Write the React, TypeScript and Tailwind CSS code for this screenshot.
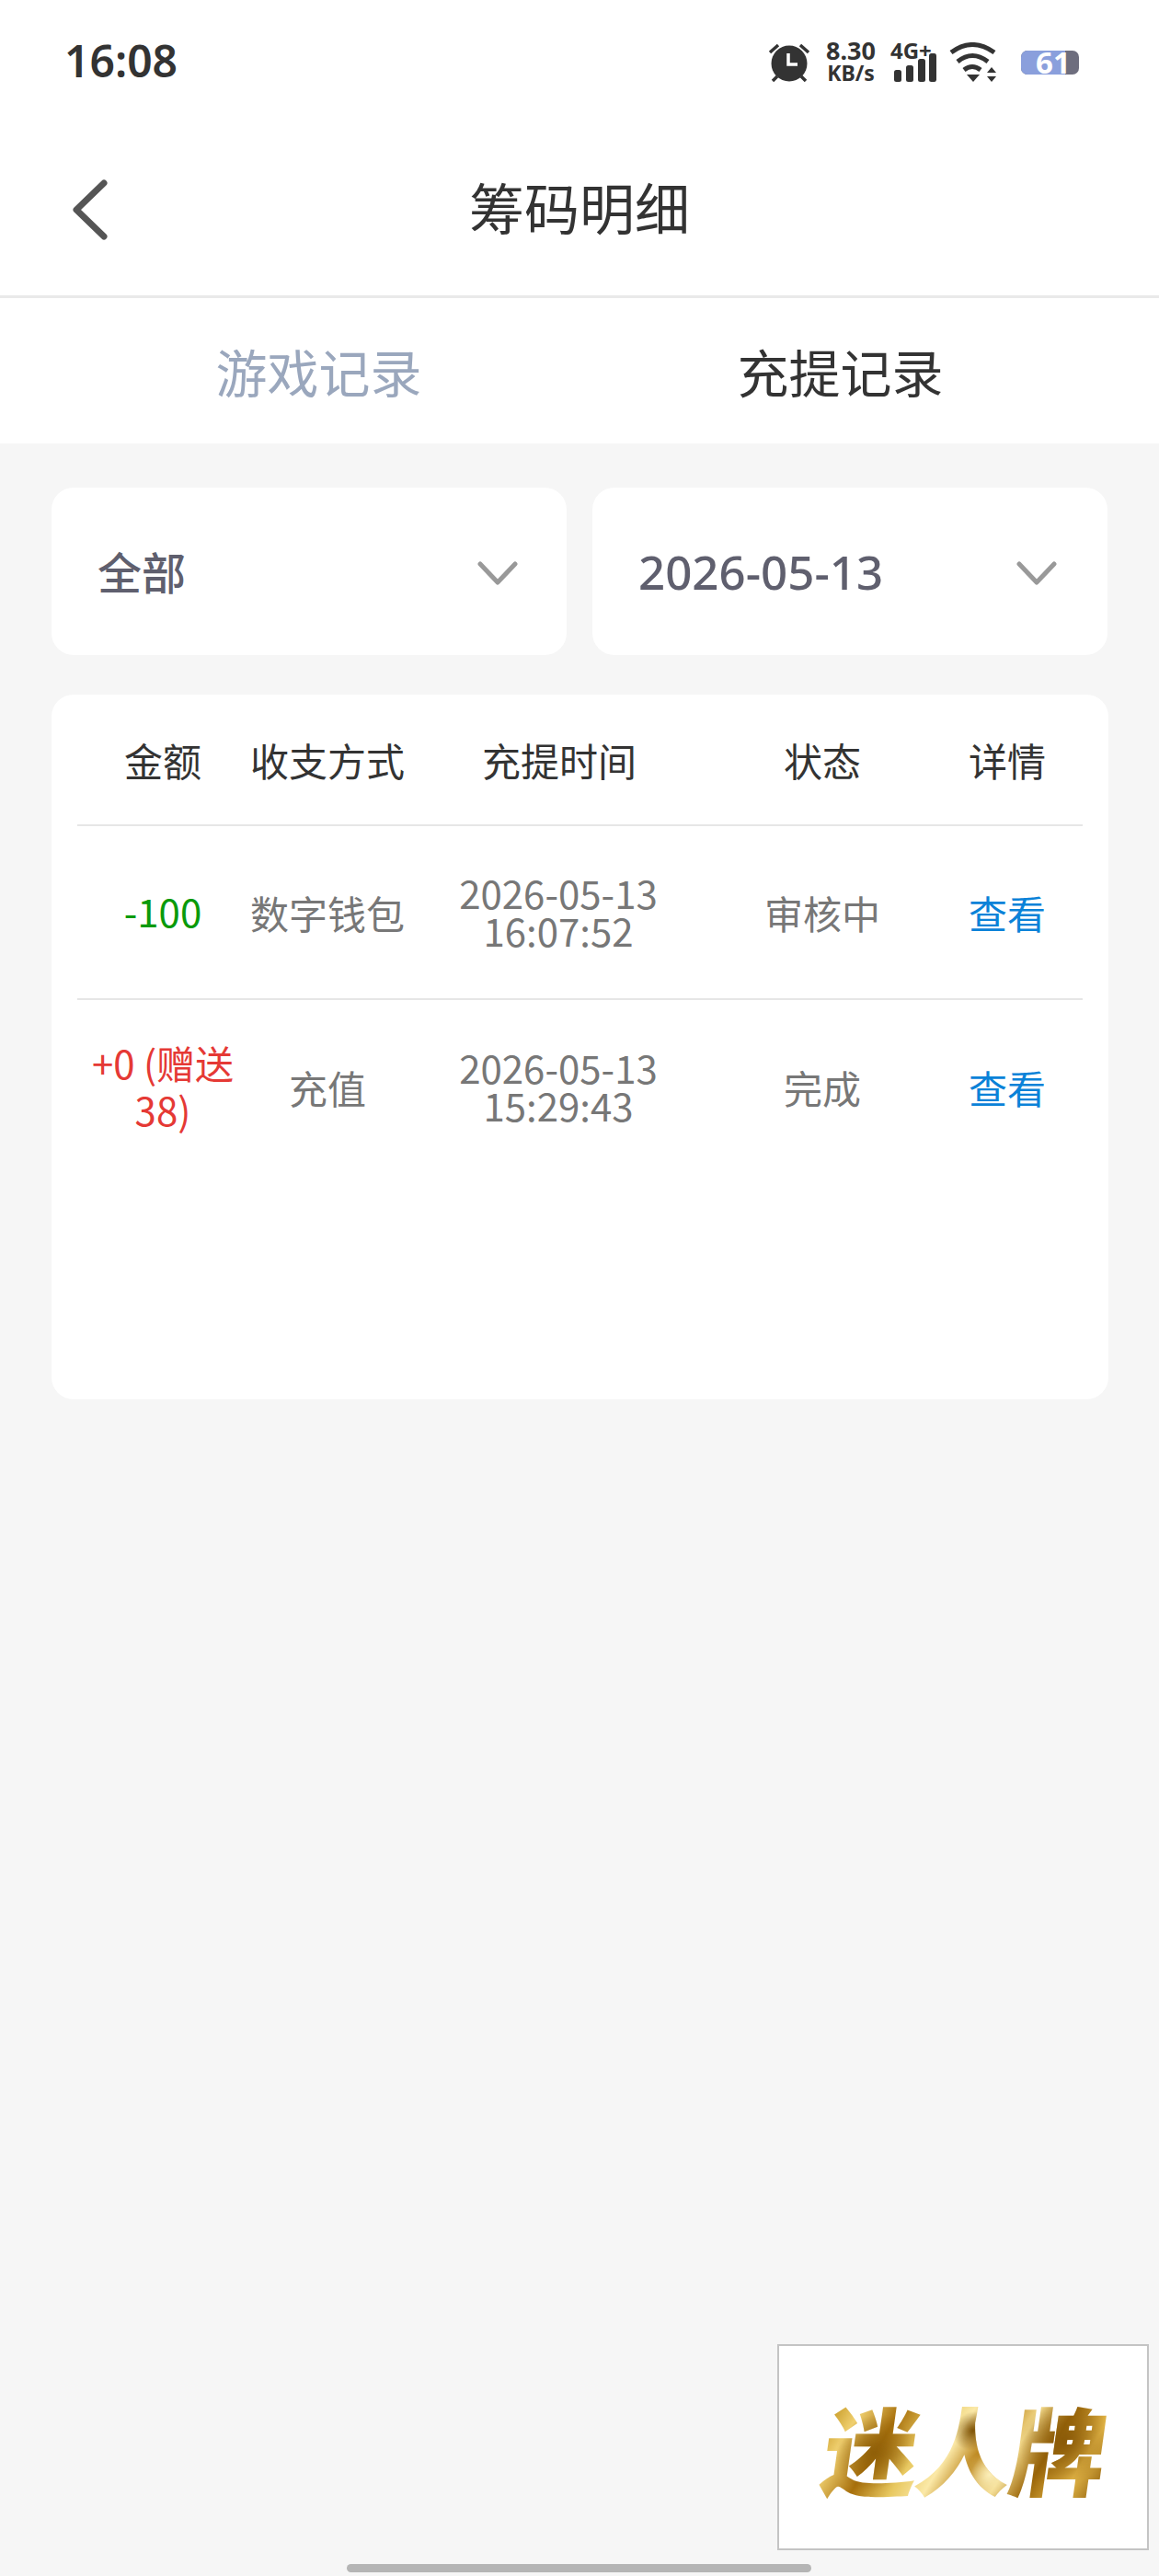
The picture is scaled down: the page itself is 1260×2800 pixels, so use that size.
const FONT = "font-['Noto_Sans_CJK_SC','Noto_Sans',sans-serif]"

const rows = [
  { amount: '-100', color: 'text-[#0a9a0a]', way: '数字钱包', date: '2026-05-13', time: '16:07:52', status: '审核中' },
  { amount: '+0 (赠送 38)', color: 'text-[#e53935]', way: '充值', date: '2026-05-13', time: '15:29:43', status: '完成' },
]

function Chevron() {
  return (
    <svg width="44" height="26" viewBox="0 0 44 26" fill="none" stroke="#999999" strokeWidth="5" strokeLinecap="round" strokeLinejoin="round" className="mt-[3px]">
      <path d="M3 3 L22 23 L41 3" />
    </svg>
  )
}

function StatusIcons() {
  return (
    <div className="flex items-center text-[#333333]">
      <svg width="46" height="44" viewBox="0 0 46 44" className="ml-[835px] shrink-0">
        <circle cx="23" cy="23" r="19.5" fill="#333333" />
        <path d="M22 12 V24 H32" fill="none" stroke="#ffffff" strokeWidth="3.5" />
        <path d="M2 11 L11 3 M44 11 L35 3 M5 42 L10 37 M41 42 L36 37" stroke="#333333" strokeWidth="3.5" />
      </svg>
      <div className="ml-[14px] flex w-[60px] shrink-0 flex-col items-center font-['Noto_Sans',sans-serif] font-bold">
        <span className="mt-[-3px] text-[27px] leading-[26px]">8.30</span>
        <span className="text-[23px] leading-[22px]">KB/s</span>
      </div>
      <div className="relative ml-[13px] h-[44px] w-[50px] shrink-0">
        <span className="absolute left-0 top-[-3px] font-['Noto_Sans',sans-serif] text-[24px] font-bold leading-[24px]">4G+</span>
        <svg width="50" height="44" viewBox="0 0 50 44" className="absolute left-0 top-0">
          <rect x="4" y="30" width="8" height="13" rx="2.5" fill="#333333" />
          <rect x="17" y="25" width="8" height="18" rx="2.5" fill="#333333" />
          <rect x="30" y="18" width="8" height="25" rx="2.5" fill="#333333" />
          <rect x="42" y="12" width="8" height="31" rx="2.5" fill="#333333" />
        </svg>
      </div>
      <svg width="52" height="44" viewBox="0 0 52 44" className="ml-[14px] shrink-0" fill="none" stroke="#333333" strokeWidth="5">
        <path d="M2 11 Q25 -6 49 11" />
        <path d="M9 21 Q25 8 42 21" />
        <path d="M16 30 Q25 23 34 30" />
        <path d="M19 35 H33 L26 43 Z" fill="#333333" stroke="none" />
        <path d="M41 33 L46 27 L51 33 Z M41 37 H51 L46 43 Z" fill="#333333" stroke="none" />
      </svg>
      <div className="relative ml-[26px] flex h-[26px] w-[63px] shrink-0 rounded-[7px] bg-[#6e6e7e]">
        <div className="h-full w-[48px] rounded-l-[7px] bg-[#8a9fdc]" />
        <span className="absolute left-[16px] top-0 font-['Noto_Sans',sans-serif] text-[33px] font-bold leading-[26px] text-white">61</span>
      </div>
    </div>
  )
}

export default function App() {
  return (
    <div className={`relative flex h-[2800px] w-[1260px] flex-col overflow-hidden bg-[#f6f6f6] ${FONT}`}>
      <div className="relative h-[132px] shrink-0 bg-white">
        <span className="absolute left-[70px] top-[33px] font-['Noto_Sans',sans-serif] text-[48px] font-semibold leading-[66px] text-[#333333]">16:08</span>
        <div className="absolute left-0 top-[45px]"><StatusIcons /></div>
      </div>

      <div className="relative flex h-[192px] shrink-0 items-start justify-center border-b-[3px] border-[#e9e9e9] bg-white">
        <svg width="40" height="66" viewBox="0 0 40 66" fill="none" stroke="#555555" strokeWidth="7" strokeLinecap="round" strokeLinejoin="round" className="absolute left-[78px] top-[63px]">
          <path d="M35 4 L5 33 L35 62" />
        </svg>
        <h1 className="mt-[52px] text-[60px] font-normal leading-[80px] text-[#333333]">筹码明细</h1>
      </div>

      <div className="grid h-[158px] shrink-0 grid-cols-2 items-center bg-white px-[63px] text-[56px] leading-[80px]">
        <span className="text-center text-[#9aa7bd]">游戏记录</span>
        <span className="text-center text-[#333333]">充提记录</span>
      </div>

      <div className="mt-[48px] grid grid-cols-2 gap-[28px] px-[56px]">
        <div className="flex h-[182px] items-center justify-between rounded-[24px] bg-white pl-[50px] pr-[53px] text-[48px] font-medium text-[#5f5f6e]">
          <span className="mt-[-3px]">全部</span>
          <Chevron />
        </div>
        <div className="flex h-[182px] items-center justify-between rounded-[24px] bg-white pl-[50px] pr-[55px] font-['Noto_Sans',sans-serif] text-[51px] font-medium text-[#5f5f6e]">
          <span>2026-05-13</span>
          <Chevron />
        </div>
      </div>

      <div className="ml-[56px] mr-[55px] mt-[43px] h-[766px] rounded-[24px] bg-white px-[28px]">
        <div className="grid h-[143px] grid-cols-[186px_172px_332px_240px_162px] items-center border-b-2 border-[#e6e6e6] text-center text-[42px] leading-[56px] text-[#333333]">
          <span>金额</span>
          <span>收支方式</span>
          <span>充提时间</span>
          <span>状态</span>
          <span>详情</span>
        </div>
        {rows.map((r, i) => (
          <div key={i} className={`grid h-[189px] grid-cols-[186px_172px_332px_240px_162px] items-center text-center text-[42px] text-[#777777] ${i === 0 ? 'border-b-2 border-[#e6e6e6]' : ''}`}>
            <span className={`mt-[-4px] px-[10px] leading-[51px] ${r.color}`}>{r.amount}</span>
            <span>{r.way}</span>
            <span className="mt-[-4px] flex flex-col pr-[2px] leading-[41px]"><span>{r.date}</span><span>{r.time}</span></span>
            <span>{r.status}</span>
            <span className="text-[#0a82d8]">查看</span>
          </div>
        ))}
      </div>

      <div className="absolute left-[845px] top-[2548px] flex h-[224px] w-[404px] items-center justify-center border-2 border-[#c4c4c4] bg-white">
        <span className="ml-[4px] -skew-x-[8deg] bg-[radial-gradient(circle_at_18%_55%,#8f5f08_0%,transparent_16%),radial-gradient(circle_at_52%_35%,#7d5206_0%,transparent_12%),radial-gradient(circle_at_60%_75%,#fbeeb8_0%,transparent_14%),radial-gradient(circle_at_85%_45%,#8a5a08_0%,transparent_18%),linear-gradient(115deg,#b8860b_0%,#f0d070_12%,#a8700c_24%,#e8c860_36%,#fbe9a8_46%,#b67d10_56%,#f3d98a_66%,#9a6508_76%,#e6b94a_88%,#8a5a08_100%)] bg-clip-text text-[104px] font-black leading-[120px] tracking-[-2px] text-transparent">迷人牌</span>
      </div>

      <div className="absolute left-[377px] top-[2787px] h-[9px] w-[505px] rounded-full bg-[#b5b5b5]" />
    </div>
  )
}
